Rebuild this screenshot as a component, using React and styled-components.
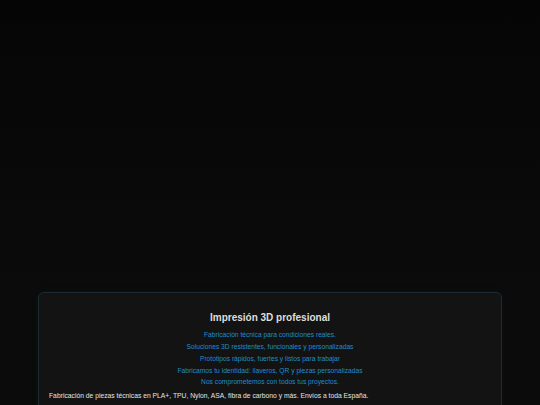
import React from 'react';
import styled, { createGlobalStyle } from 'styled-components';

const GlobalStyle = createGlobalStyle`
  html, body {
    margin: 0;
    padding: 0;
    background: #0a0a0a;
  }
  body {
    font-family: "Liberation Sans", Arial, sans-serif;
  }
`;

const Page = styled.div`
  min-height: 405px;
  background: linear-gradient(180deg, #050505 0%, #0b0b0b 290px, #0b0b0b 100%);
  overflow: hidden;
`;

const Hero = styled.section`
  height: 292px;
`;

const Card = styled.section`
  margin: 0 38px 40px;
  background: #131313;
  border: 1px solid #1c2a31;
  border-radius: 6px;
  padding: 18px 10px 20px;
  box-shadow: 0 0 6px rgba(20, 60, 80, 0.15);
`;

const Title = styled.h2`
  margin: 0 0 4px;
  text-align: center;
  color: #dedede;
  font-size: 10px;
  line-height: 14px;
  font-weight: 700;
`;

const Taglines = styled.ul`
  list-style: none;
  margin: 0 0 3px;
  padding: 0;
  text-align: center;
`;

const Tagline = styled.li`
  color: #1f8dcc;
  font-size: 6.7px;
  line-height: 11.85px;
`;

const Body = styled.p`
  margin: 0;
  color: #e4e4e4;
  font-size: 6.75px;
  line-height: 10px;
`;

const taglines = [
  'Fabricación técnica para condiciones reales.',
  'Soluciones 3D resistentes, funcionales y personalizadas',
  'Prototipos rápidos, fuertes y listos para trabajar',
  'Fabricamos tu identidad: llaveros, QR y piezas personalizadas',
  'Nos comprometemos con todos tus proyectos.',
];

export default function App() {
  return (
    <>
      <GlobalStyle />
      <Page>
        <Hero />
        <Card>
          <Title>Impresión 3D profesional</Title>
          <Taglines>
            {taglines.map((t) => (
              <Tagline key={t}>{t}</Tagline>
            ))}
          </Taglines>
          <Body>
            Fabricación de piezas técnicas en PLA+, TPU, Nylon, ASA, fibra de carbono y más. Envíos a toda España.
          </Body>
        </Card>
      </Page>
    </>
  );
}
